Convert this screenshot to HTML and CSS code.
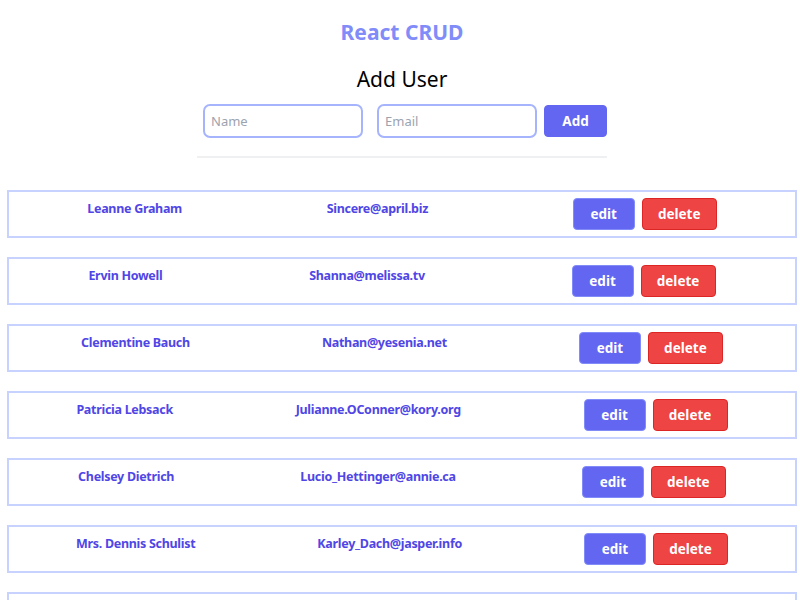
FILE: index.html
```html
<!DOCTYPE html>
<html lang="en">
<head>
<meta charset="utf-8">
<title>React CRUD</title>
<link rel="stylesheet" href="styles.css">
</head>
<body>
<div class="app">
  <h1 class="title">React CRUD</h1>
  <div class="panel">
    <h2 class="subtitle">Add User</h2>
    <form class="add-form">
      <input class="field field-name" type="text" placeholder="Name">
      <input class="field field-email" type="text" placeholder="Email">
      <button class="btn btn-add" type="button">Add</button>
    </form>
    <hr class="divider">
  </div>
  <div class="list">
    <div class="user"><span class="user-text">Leanne Graham</span><span class="user-text">Sincere@april.biz</span><div class="actions"><button class="btn btn-edit">edit</button><button class="btn btn-delete">delete</button></div></div>
    <div class="user"><span class="user-text">Ervin Howell</span><span class="user-text">Shanna@melissa.tv</span><div class="actions"><button class="btn btn-edit">edit</button><button class="btn btn-delete">delete</button></div></div>
    <div class="user"><span class="user-text">Clementine Bauch</span><span class="user-text">Nathan@yesenia.net</span><div class="actions"><button class="btn btn-edit">edit</button><button class="btn btn-delete">delete</button></div></div>
    <div class="user"><span class="user-text">Patricia Lebsack</span><span class="user-text">Julianne.OConner@kory.org</span><div class="actions"><button class="btn btn-edit">edit</button><button class="btn btn-delete">delete</button></div></div>
    <div class="user"><span class="user-text">Chelsey Dietrich</span><span class="user-text">Lucio_Hettinger@annie.ca</span><div class="actions"><button class="btn btn-edit">edit</button><button class="btn btn-delete">delete</button></div></div>
    <div class="user"><span class="user-text">Mrs. Dennis Schulist</span><span class="user-text">Karley_Dach@jasper.info</span><div class="actions"><button class="btn btn-edit">edit</button><button class="btn btn-delete">delete</button></div></div>
    <div class="user"><span class="user-text">Kurtis Weissnat</span><span class="user-text">Telly.Hoeger@billy.biz</span><div class="actions"><button class="btn btn-edit">edit</button><button class="btn btn-delete">delete</button></div></div>
  </div>
</div>
</body>
</html>
```

FILE: styles.css
```css
html, body {
  margin: 0;
  padding: 0;
  background: #ffffff;
}

body {
  font-family: "Noto Sans", "Open Sans", sans-serif;
  overflow: hidden;
}

.app {
  width: 800px;
  box-sizing: border-box;
  padding-left: 4px;
}

.title {
  margin: 17px 0 0;
  font-size: 21px;
  line-height: 30px;
  font-weight: 700;
  color: #818cf8;
  text-align: center;
}

.panel {
  width: 410px;
  margin: 0 auto;
}

.subtitle {
  margin: 17px 0 0;
  font-size: 21px;
  line-height: 30px;
  font-weight: 400;
  color: #000000;
  text-align: center;
}

.add-form {
  display: flex;
  align-items: center;
  margin: 10px 0 0;
  padding-left: 6px;
}

.field {
  box-sizing: border-box;
  width: 160px;
  height: 34px;
  border: 2px solid #a5b4fc;
  border-radius: 7px;
  padding: 0 6px;
  font-family: inherit;
  font-size: 13px;
  color: #111827;
  outline: none;
}

.field::placeholder {
  color: #9ca3af;
}

.field-name {
  margin-right: 14px;
}

.field-email {
  margin-right: 7px;
}

.btn {
  box-sizing: border-box;
  height: 32px;
  padding: 0;
  border-radius: 4px;
  font-family: inherit;
  font-size: 13.5px;
  font-weight: 700;
  color: #ffffff;
  cursor: pointer;
}

.btn-add {
  width: 63px;
  background: #6366f1;
  border: 1px solid #6366f1;
}

.divider {
  margin: 18px 0 0;
  border: 0;
  border-top: 2px solid #eff0f2;
  height: 0;
}

.list {
  margin-top: 32px;
}

.user {
  display: flex;
  justify-content: space-around;
  align-items: flex-start;
  margin: 0 3px 19px;
  padding: 6px;
  border: 2px solid #c7d2fe;
}

.user-text {
  padding-top: 1px;
  font-size: 12.5px;
  line-height: 19px;
  letter-spacing: -0.3px;
  font-weight: 700;
  color: #4f46e5;
}

.actions {
  display: flex;
  gap: 7px;
}

.btn-edit {
  width: 62px;
  background: #6366f1;
  border: 1px solid #818cf8;
}

.btn-delete {
  width: 75px;
  background: #ef4444;
  border: 1px solid #dc2626;
}
```
